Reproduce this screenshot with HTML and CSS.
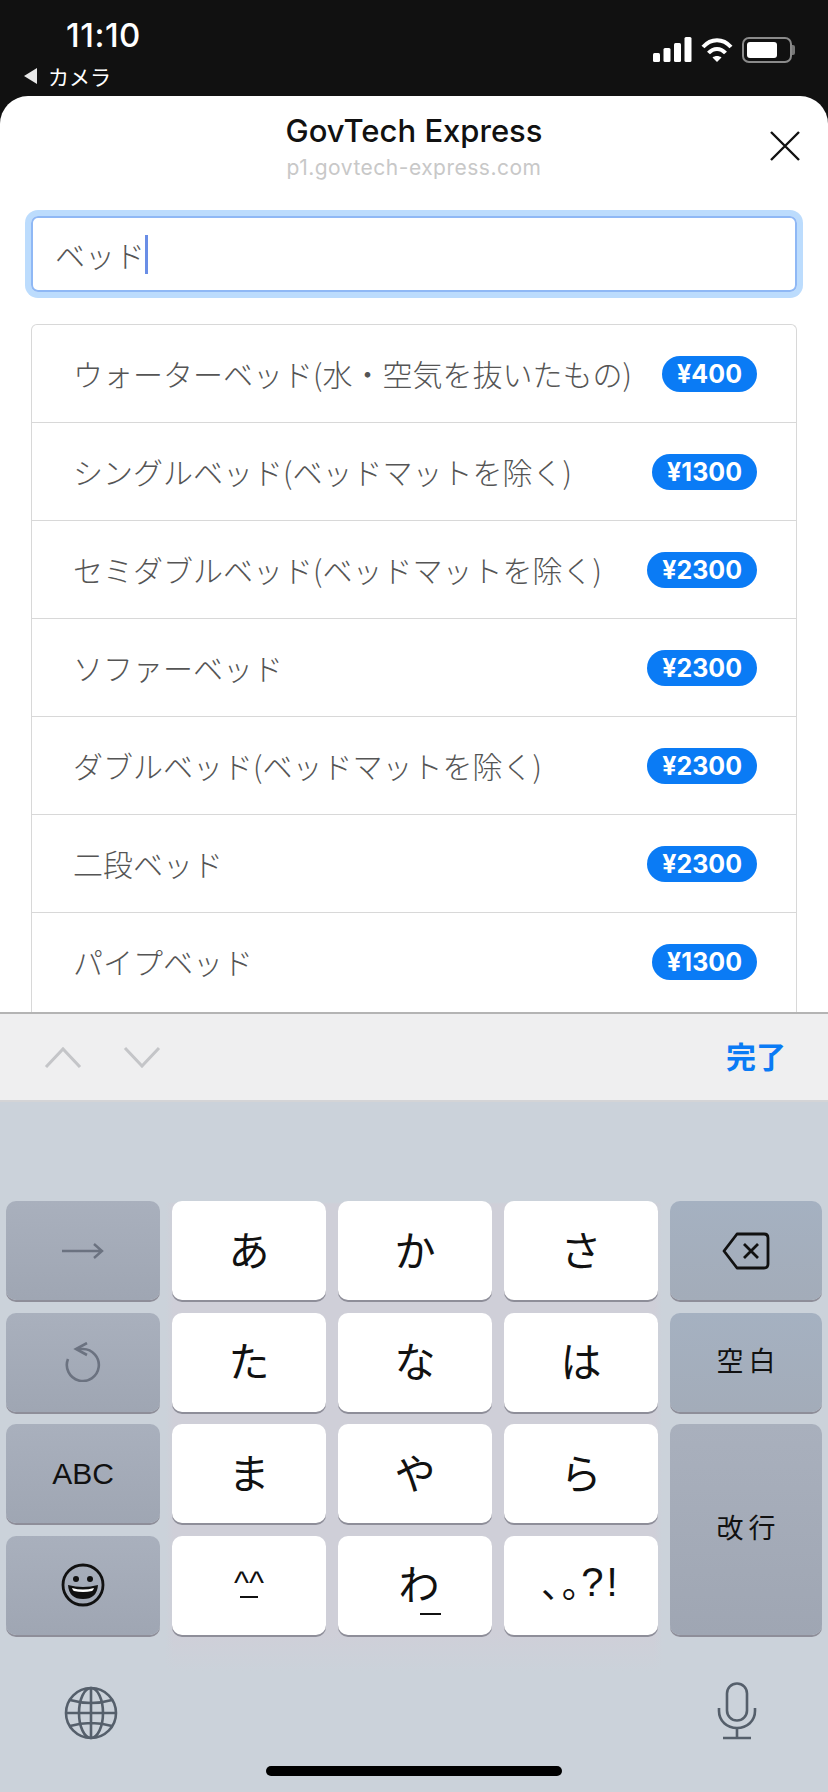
FILE: index.html
```html
<!DOCTYPE html>
<html lang="ja">
<head>
    <meta charset="utf-8">
    <title>GovTech Express</title>
    <link rel="stylesheet" href="styles.css">
</head>
<body>
    <div class="status-bar">
        <div class="status-left">
            <div class="time">11:10</div>
            <div class="back-app"><span class="back-arrow"></span>カメラ</div>
        </div>
        <div class="status-icons">
            <svg width="39" height="26" viewBox="0 0 39 26" fill="#fff">
                <rect x="0" y="16" width="7" height="9" rx="1.5"/>
                <rect x="10.5" y="11" width="7" height="14" rx="1.5"/>
                <rect x="21" y="6" width="7" height="19" rx="1.5"/>
                <rect x="31.5" y="0" width="7" height="25" rx="1.5"/>
            </svg>
            <svg width="32" height="26" viewBox="0 0 32 26" fill="none" stroke="#fff" stroke-width="4">
                <path d="M2 10 C10 1 22 1 30 10"/>
                <path d="M7.5 16 C12.5 10.5 19.5 10.5 24.5 16"/>
                <path d="M16 25 L11.5 20.5 C14 18.5 18 18.5 20.5 20.5 Z" fill="#fff" stroke="none"/>
            </svg>
            <div class="battery"><div class="battery-level"></div></div>
            <div class="battery-tip"></div>
        </div>
    </div>

    <div class="sheet">
        <div class="sheet-header">
            <div></div>
            <div class="sheet-title">
                <h1>GovTech Express</h1>
                <div class="sheet-url">p1.govtech-express.com</div>
            </div>
            <svg class="close-btn" width="32" height="32" viewBox="0 0 32 32" stroke="#111" stroke-width="2.4" fill="none">
                <path d="M2 2 L30 30 M30 2 L2 30"/>
            </svg>
        </div>

        <div class="search-box">ベッド<span class="caret"></span></div>

        <ul class="result-list">
            <li><span class="item-name">ウォーターベッド(水・空気を抜いたもの)</span><span class="price">¥400</span></li>
            <li><span class="item-name">シングルベッド(ベッドマットを除く)</span><span class="price">¥1300</span></li>
            <li><span class="item-name">セミダブルベッド(ベッドマットを除く)</span><span class="price">¥2300</span></li>
            <li><span class="item-name">ソファーベッド</span><span class="price">¥2300</span></li>
            <li><span class="item-name">ダブルベッド(ベッドマットを除く)</span><span class="price">¥2300</span></li>
            <li><span class="item-name">二段ベッド</span><span class="price">¥2300</span></li>
            <li><span class="item-name">パイプベッド</span><span class="price">¥1300</span></li>
        </ul>
    </div>

    <div class="toolbar">
        <div class="toolbar-arrows">
            <svg width="38" height="22" viewBox="0 0 38 22" fill="none" stroke="#c4c5c8" stroke-width="3">
                <path d="M2 21 L19 3 L36 21"/>
            </svg>
            <svg width="38" height="22" viewBox="0 0 38 22" fill="none" stroke="#c4c5c8" stroke-width="3">
                <path d="M2 2 L19 20 L36 2"/>
            </svg>
        </div>
        <div class="done">完了</div>
    </div>

    <div class="keyboard">
        <div class="key-grid">
            <div class="key fn icon-key">
                <svg width="42" height="16" viewBox="0 0 42 16" fill="none" stroke="#6b7280" stroke-width="2.4">
                    <path d="M0 8 H40 M32 1 L40 8 L32 15"/>
                </svg>
            </div>
            <div class="key">あ</div>
            <div class="key">か</div>
            <div class="key">さ</div>
            <div class="key fn fn-blue icon-key">
                <svg width="48" height="38" viewBox="0 0 48 38" fill="none" stroke="#111" stroke-width="2.8" stroke-linejoin="round">
                    <path d="M15 2 H42 Q46 2 46 6 V32 Q46 36 42 36 H15 L2 19 Z"/>
                    <path d="M22 12 L36 26 M36 12 L22 26"/>
                </svg>
            </div>

            <div class="key fn icon-key">
                <svg width="36" height="40" viewBox="0 0 36 40" fill="none" stroke="#6b7280" stroke-width="2.6">
                    <path d="M12 7 H18 A16 16 0 1 1 3 17"/>
                    <path d="M22 1 L11 7 L22 13"/>
                </svg>
            </div>
            <div class="key">た</div>
            <div class="key">な</div>
            <div class="key">は</div>
            <div class="key fn fn-blue small">空白</div>

            <div class="key fn small latin">ABC</div>
            <div class="key">ま</div>
            <div class="key">や</div>
            <div class="key">ら</div>
            <div class="key fn small return-key">改行</div>

            <div class="key fn icon-key">
                <svg width="44" height="44" viewBox="0 0 44 44">
                    <circle cx="22" cy="22" r="20" fill="none" stroke="#111" stroke-width="2.8"/>
                    <circle cx="15" cy="16" r="3" fill="#111"/>
                    <circle cx="29" cy="16" r="3" fill="#111"/>
                    <path d="M7 22 Q22 26 37 22 Q36 36 22 36 Q8 36 7 22 Z" fill="#111"/>
                    <path d="M11 25 Q22 28 33 25 Q32 28 31 28 Q22 30 13 28 Q12 28 11 25 Z" fill="#fff"/>
                </svg>
            </div>
            <div class="key face">^^<span class="face-mouth"></span></div>
            <div class="key wa">わ<span class="wa-mark"></span></div>
            <div class="key punct"><span class="punct-kana">、。</span>?!</div>
        </div>

        <div class="keyboard-bottom">
            <svg width="54" height="54" viewBox="0 0 54 54" fill="none" stroke="#555f6b" stroke-width="2.6">
                <circle cx="27" cy="27" r="25"/>
                <ellipse cx="27" cy="27" rx="12" ry="25"/>
                <path d="M27 2 V52 M2 27 H52 M6 14 Q27 20 48 14 M6 40 Q27 34 48 40"/>
            </svg>
            <svg width="40" height="58" viewBox="0 0 40 58" fill="none" stroke="#555f6b" stroke-width="2.6">
                <rect x="10" y="1.5" width="20" height="37" rx="10"/>
                <path d="M2 26 V29 C2 39 10 46 20 46 C30 46 38 39 38 29 V26"/>
                <path d="M20 46 V56 M6 56 H34"/>
            </svg>
        </div>
        <div class="home-bar"></div>
    </div>
</body>
</html>
```

FILE: styles.css
```css
* {
    box-sizing: border-box;
}
html, body {
    margin: 0;
    padding: 0;
}
body {
    width: 828px;
    height: 1792px;
    overflow: hidden;
    display: flex;
    flex-direction: column;
    background-color: #111111;
    font-family: Inter, "Noto Sans CJK JP", sans-serif;
}

/* status bar */
.status-bar {
    height: 96px;
    flex: none;
    display: flex;
    justify-content: space-between;
    padding: 18px 33px 0 24px;
    color: #fff;
}
.time {
    font-size: 33px;
    font-weight: 500;
    letter-spacing: 0.5px;
    line-height: 34px;
    margin-left: 42px;
}
.back-app {
    display: flex;
    align-items: center;
    font-family: "Noto Sans CJK JP", sans-serif;
    font-size: 21px;
    line-height: 28px;
    margin-top: 10px;
    gap: 11px;
}
.back-arrow {
    width: 0;
    height: 0;
    border-top: 8px solid transparent;
    border-bottom: 8px solid transparent;
    border-right: 13px solid #e8e8e8;
}
.status-icons {
    display: flex;
    align-items: center;
    gap: 9px;
    height: 26px;
    margin-top: 19px;
}
.battery {
    width: 50px;
    height: 26px;
    border: 2px solid #8a8a8a;
    border-radius: 7px;
    padding: 3px;
}
.battery-level {
    width: 30px;
    height: 16px;
    background: #fff;
    border-radius: 3px;
}
.battery-tip {
    width: 3px;
    height: 10px;
    margin-left: -9px;
    background: #777;
    border-radius: 0 2px 2px 0;
}

/* sheet */
.sheet {
    flex: none;
    height: 916px;
    background: #fff;
    border-radius: 28px 28px 0 0;
    overflow: hidden;
    padding: 0 31px;
}
.sheet-header {
    display: grid;
    grid-template-columns: 1fr auto 1fr;
    height: 120px;
}
.sheet-title {
    text-align: center;
    padding-top: 17px;
}
h1 {
    margin: 0;
    font-size: 31px;
    font-weight: 500;
    line-height: 36px;
    color: #111;
}
.sheet-url {
    font-size: 21px;
    letter-spacing: 0.5px;
    line-height: 26px;
    margin-top: 6px;
    color: #c8c8c8;
}
.close-btn {
    justify-self: end;
    margin-top: 34px;
    margin-right: -4px;
}
.search-box {
    display: flex;
    align-items: center;
    height: 76px;
    padding-left: 22px;
    border: 2px solid #8fb8f5;
    border-radius: 7px;
    box-shadow: 0 0 0 6px #bcdcfd;
    font-family: "Noto Sans CJK JP", sans-serif;
    font-size: 30px;
    font-weight: 300;
    color: #555;
}
.caret {
    width: 3px;
    height: 39px;
    background: #6a8ee6;
}
.result-list {
    list-style: none;
    margin: 32px 0 0;
    padding: 0;
    border: 1px solid #d8d8d8;
    border-bottom: none;
    border-radius: 6px 6px 0 0;
}
.result-list li {
    height: 98px;
    display: flex;
    align-items: center;
    justify-content: space-between;
    padding: 0 39px 0 41px;
    border-bottom: 1px solid #d8d8d8;
    font-family: "Noto Sans CJK JP", sans-serif;
    font-size: 30px;
    font-weight: 300;
    color: #555;
}
.result-list li:last-child {
    height: 110px;
    padding-bottom: 12px;
    border-bottom: none;
}
.item-name {
    margin-bottom: 2px;
}
.price {
    height: 36px;
    line-height: 36px;
    padding: 0 15px;
    border-radius: 18px;
    background: #0a7bf5;
    color: #fff;
    font-family: Inter, sans-serif;
    font-size: 25px;
    font-weight: 700;
}

/* toolbar above the keyboard */
.toolbar {
    flex: none;
    height: 88px;
    display: flex;
    align-items: center;
    justify-content: space-between;
    padding: 0 42px 0 44px;
    background: #efeff0;
    border-top: 2px solid #b4b4b4;
}
.toolbar-arrows {
    display: flex;
    gap: 41px;
}
.done {
    font-family: "Noto Sans CJK JP", sans-serif;
    font-size: 30px;
    font-weight: 700;
    line-height: 36px;
    margin-bottom: 4px;
    color: #0a7bf5;
}

/* keyboard */
.keyboard {
    flex: 1;
    display: flex;
    flex-direction: column;
    padding: 99px 6px 16px;
    background:
        linear-gradient(180deg, #cbd2da 100px, transparent 102px, transparent 530px, #cbd2da 570px),
        linear-gradient(90deg, #cbd2da 20%, #cfcfd8 21%, #cfcfd8 79%, #cbd2da 80%);
    border-top: 2px solid #d4d4d6;
}
.key-grid {
    display: grid;
    grid-template-columns: 154px 154px 154px 154px 152px;
    grid-auto-rows: 99px;
    column-gap: 12px;
    row-gap: 12.66px;
}
.key {
    display: flex;
    align-items: center;
    justify-content: center;
    padding-bottom: 6px;
    background: #fff;
    border-radius: 10px;
    box-shadow: 0 2px 0 #8e8e99;
    font-family: "Noto Sans CJK JP", sans-serif;
    font-size: 41px;
    color: #111;
}
.icon-key {
    padding-bottom: 0;
}
.fn {
    background: linear-gradient(180deg, #a9b0bd 0%, #9fa6b3 100%);
}
.fn-blue {
    background: linear-gradient(180deg, #a5b1c1 0%, #a3acb9 100%);
}
.small {
    font-size: 27px;
    letter-spacing: 5px;
    text-indent: 5px;
}
.latin {
    padding-bottom: 0;
    font-family: "Liberation Sans", sans-serif;
    font-size: 30px;
    letter-spacing: 0;
    text-indent: 0;
}
.return-key {
    grid-row: span 2;
}
.face {
    position: relative;
    font-family: "Liberation Sans", sans-serif;
    font-size: 32px;
}
.face-mouth {
    position: absolute;
    left: 68px;
    bottom: 37px;
    width: 18px;
    height: 2px;
    background: #111;
}
.punct {
    font-family: "Liberation Sans", sans-serif;
    font-size: 40px;
    letter-spacing: 3px;
}
.punct-kana {
    font-family: "Noto Sans CJK JP", sans-serif;
    font-feature-settings: "palt";
    font-size: 36px;
    letter-spacing: 2px;
}
.wa {
    position: relative;
    padding-left: 8px;
}
.wa-mark {
    position: absolute;
    left: 82px;
    bottom: 20px;
    width: 21px;
    height: 2px;
    background: #111;
}
.keyboard-bottom {
    display: flex;
    justify-content: space-between;
    align-items: flex-end;
    margin-top: 47px;
    padding: 0 65px 0 58px;
}
.home-bar {
    width: 296px;
    height: 10px;
    margin: auto auto 0;
    background: #000;
    border-radius: 5px;
}
```
